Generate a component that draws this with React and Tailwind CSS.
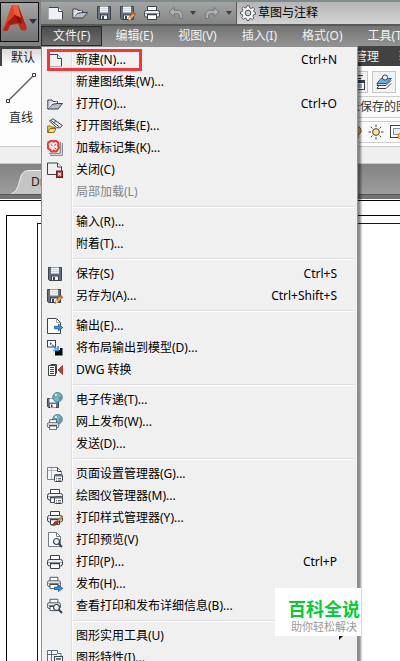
import React from 'react';

const INK = '#3b424c';

function Svg({ children, className = 'h-4 w-4' }) {
  return (
    <svg viewBox="0 0 16 16" className={`${className} shrink-0`} fill="none" aria-hidden="true">
      {children}
    </svg>
  );
}

const PageShape = () => (
  <g>
    <path d="M1 2.5H10.5L14.5 6.5V14.5H1Z" fill="#eef0f3" />
    <path d="M1 2.5H10.5L14.5 6.5V14.5" stroke={INK} />
    <path d="M0.5 2.5V14.5H14" stroke="#a9adb3" />
    <path d="M10.5 2.5V6.5H14.5" stroke={INK} fill="#fff" />
  </g>
);
const FolderShape = () => (
  <g stroke={INK} strokeLinejoin="round">
    <path d="M0.8 13V4H5L6 5.5H10.5V8" fill="#d8dbe0" />
    <path d="M0.8 13L5 8.5L10 7.5H15.5L11 13Z" fill="#b9bec6" />
    <path d="M1.5 12L5 7L10 6" stroke="#f7f7f7" />
  </g>
);
const FloppyShape = () => (
  <g>
    <path d="M1.5 1.5H14.5V14.5H2.5L1.5 13.5Z" fill="#66717f" stroke={INK} />
    <rect x="4" y="1.5" width="8" height="6" fill="#f4f5f6" />
    <path d="M4 3.5H12M4 5.5H12" stroke="#d5d8dc" />
    <rect x="4.5" y="10" width="7" height="4.5" fill="#f4f5f6" stroke={INK} />
    <rect x="6" y="11" width="2" height="3" fill={INK} />
  </g>
);
const PrinterShape = () => (
  <g stroke={INK}>
    <path d="M3.5 6V1.5H12.5V6" fill="#fff" />
    <rect x="0.5" y="5.5" width="15" height="6.5" rx="2" fill="#edeff1" />
    <path d="M1 8.5H15" stroke="#9aa0a8" />
    <path d="M3.5 9.5H12.5V14.5H3.5Z" fill="#fff" />
    <path d="M3 9.5H13" strokeWidth="1.5" />
  </g>
);
const PencilShape = () => (
  <g>
    <path d="M8 15.2L9 12.2L13.4 7.8L15.4 9.8L11 14.2Z" fill="#f3a431" stroke="#6b5024" strokeWidth=".6" />
    <path d="M12.8 8.4L14.8 10.4L16 9L14 7Z" fill="#c9563a" />
    <path d="M8 15.2L9 12.2L11 14.2Z" fill="#fff2d0" />
    <path d="M7.6 15.6L8.2 14.2L9.1 15.1Z" fill="#222" />
  </g>
);
const ArrowShape = ({ y = 9 }) => (
  <path d={`M7.5 ${y - 1.2}H11.5V${y - 3.3}L15.8 ${y}L11.5 ${y + 3.3}V${y + 1.2}H7.5Z`} fill="#3390e4" stroke="#145a9e" strokeWidth=".8" />
);
const LensShape = () => (
  <g>
    <circle cx="9.5" cy="9.5" r="3" fill="#e5f1fa" stroke={INK} strokeWidth="1.2" />
    <path d="M11.8 11.8L15 15" stroke={INK} strokeWidth="2" />
  </g>
);
const GlobeShape = () => (
  <g>
    <circle cx="10.5" cy="5.3" r="4.8" fill="#6bb5de" stroke="#40677f" strokeWidth=".8" />
    <path d="M8 2.3Q10 .8 11 3L9.8 5L8 5.8Q6.3 5 8 2.3ZM12 4.3L14.5 3.8Q15 7 12.8 8.5L11.5 6.8Z" fill="#6d9a78" />
    <circle cx="9" cy="3" r="1.2" fill="#d9f0fa" />
  </g>
);
const ListShape = () => (
  <g>
    <rect x="7.5" y="8.5" width="8" height="7" rx="1" fill="#fff" stroke={INK} />
    <path d="M8 9.5H15" stroke="#66717f" strokeWidth="2" />
    <path d="M9 12.5H10M11 12.5H14M9 14.2H10M11 14.2H14" stroke={INK} strokeWidth=".8" />
  </g>
);

const NewIcon = () => <Svg><PageShape /></Svg>;
const OpenIcon = () => <Svg><FolderShape /></Svg>;
const SaveIcon = () => <Svg><FloppyShape /></Svg>;
const SaveAsIcon = () => (
  <Svg><g transform="translate(-1 0)"><FloppyShape /></g><PencilShape /></Svg>
);
const PrintIcon = () => <Svg><PrinterShape /></Svg>;
const SheetSetIcon = () => (
  <Svg>
    <path d="M2.5 3L6 .8L15.3 7.5L12.8 10L9.5 9.5Z" fill="#eceef0" stroke={INK} />
    <path d="M4 2.5L12.5 9M6.8 4.6L8.8 3" stroke={INK} />
    <path d="M.7 14.5V8H3.5L4.5 9.2H8V10.5" fill="#f6cf55" stroke="#8e6410" />
    <path d="M.7 14.5L3 10.5H9L7 14.5Z" fill="#ffdf72" stroke="#8e6410" />
  </Svg>
);
const MarkupIcon = () => (
  <Svg>
    <path d="M15.3 3V15.3H3M13.3 2V13.3H2" stroke="#6e7680" />
    <rect x="0" y="0" width="12" height="12" fill="#fbdede" />
    <path d="M3 1.5Q5 -.3 6.3 1.7Q8.5 -.3 10 1.6Q12.5 3 11 5.4Q12.8 8 10.7 9.3Q9.5 12.5 6.8 10.8Q4 12.6 3.3 9.8Q0 9.2 1.3 6.2Q-.5 3 3 1.5Z" fill="#fce9e9" stroke="#f03434" strokeWidth="2" />
    <path d="M3.8 4.5L5.5 5.5M8.8 4L7.5 5.8M7.5 8L9 8.5" stroke="#f03434" />
  </Svg>
);
const CloseFileIcon = () => (
  <Svg>
    <path d="M.5 1H10.5L14.5 5V12.5H.5Z" fill="#eef0f3" stroke={INK} />
    <path d="M10.5 1V5H14.5" fill="#fff" stroke={INK} />
    <rect x="9.5" y="9" width="6" height="6.5" fill="#bf3434" stroke="#7e1717" />
    <path d="M11.1 10.8L14 13.7M14 10.8L11.1 13.7" stroke="#fff" strokeWidth="1.1" />
  </Svg>
);
const ExportIcon = () => (
  <Svg>
    <path d="M.5 .5H9.5L13.5 4.5V15.5H.5Z" fill="#fff" stroke={INK} />
    <path d="M9.5 .5V4.5H13.5" stroke="#9aa0a8" />
    <ArrowShape y={9.5} />
  </Svg>
);
const LayoutIcon = () => (
  <Svg>
    <rect x=".5" y=".5" width="8" height="6.5" fill="#fff" stroke={INK} />
    <path d="M3 2V5L5 4Z" fill={INK} />
    <path d="M8 10V15.5H15.5V8H13V10Z" fill="#050505" />
    <path d="M5 5L9.5 9M11 6V10.5H6.3" stroke="#3d95dd" strokeWidth="1.7" />
  </Svg>
);
const DwgIcon = () => (
  <Svg>
    <path d="M3.5 2.5H9.5V11.5" fill="#fff" stroke={INK} />
    <path d="M1.5 3.5H8.5V13.5H1.5Z" stroke={INK} fill="#fff" />
    <path d="M3 5.5H7M3 7.5H7M3 9.5H7M3 11.5H7" stroke={INK} />
    <path d="M15.5 3.5V12.5L11 8Z" fill="#d63434" stroke="#891b1b" strokeWidth=".7" />
  </Svg>
);
const TransmitIcon = () => (
  <Svg>
    <path d="M.5 6.5H11.5V15.5H1.5L.5 14.5Z" fill="#66717f" stroke={INK} />
    <rect x="2.5" y="6.5" width="7" height="4" fill="#fff" />
    <rect x="3" y="12" width="6" height="3.5" fill="#fff" />
    <rect x="4" y="12.5" width="1.5" height="2.5" fill={INK} />
    <GlobeShape />
  </Svg>
);
const WebPublishIcon = () => (
  <Svg><GlobeShape /><g transform="translate(0 4.5) scale(.76)"><PrinterShape /></g></Svg>
);
const PageSetupIcon = () => (
  <Svg>
    <path d="M.5 1.5H10.5L14.5 5.5V13.5H.5Z" fill="#f6f7f8" stroke="#777f89" />
    <path d="M4.5 2V13M1 4.5H10" stroke="#aeb4bc" />
    <path d="M10.5 1.5V5.5H14.5" stroke={INK} />
    <ListShape />
  </Svg>
);
const PlotterIcon = () => <Svg><PrinterShape /><ListShape /></Svg>;
const PlotStyleIcon = () => (
  <Svg>
    <PrinterShape />
    <path d="M10 11L14.5 6L16 7.5L11.5 12Z" fill="#f19c3a" stroke="#70471e" strokeWidth=".6" />
    <path d="M10.2 10.8Q7 10.8 6.3 13.5L4 15.5Q10 17 12 12.3Z" fill="#80462b" />
  </Svg>
);
const PreviewIcon = () => (
  <Svg>
    <path d="M1.5 .5H9.5L13.5 4.5V14.5H1.5Z" fill="#fff" stroke="#747c87" />
    <path d="M9.5 .5V4.5H13.5" stroke="#747c87" />
    <LensShape />
  </Svg>
);
const PublishIcon = () => (
  <Svg><g transform="scale(.87)"><PrinterShape /></g><ArrowShape y={12.3} /></Svg>
);
const DetailsIcon = () => (
  <Svg><g transform="scale(.87)"><PrinterShape /></g><LensShape /></Svg>
);
const PropertiesIcon = () => (
  <Svg>
    <path d="M.5 .5H10.5V3.5H14V13.5H.5Z" fill="#f2f3f5" stroke="#646c77" />
    <path d="M4.5 1V13M1 4.5H10" stroke="#646c77" />
    <rect x="7.5" y="6.5" width="8" height="9" fill="#fff" stroke={INK} />
    <path d="M9 9H14" stroke="#2f83d0" strokeWidth="2" />
  </Svg>
);
const UndoIcon = ({ flip }) => (
  <Svg className={flip ? 'h-4 w-4 -scale-x-100' : 'h-4 w-4'}>
    <path d="M1 7L6 2.5V5.3H10Q14.8 5.5 14.3 11V13.5H11.5V11Q11.5 8.7 9.5 8.7H6V11.5Z" fill="#b0b1b2" stroke="#66696b" strokeWidth=".8" />
  </Svg>
);
const Caret = () => (
  <svg viewBox="0 0 6 4" className="h-1 w-1.5 shrink-0" aria-hidden="true"><path d="M0 0H6L3 4Z" fill="#3d4043" /></svg>
);
const GearIcon = () => (
  <Svg className="pointer-events-none h-4 w-4">
    <path d="M6.8 .7H9.2L9.6 2.8L11.3 3.5L13.1 2.3L14.7 4L13.5 5.7L14 7L15.5 7.4V9.3L13.5 9.8L12.9 11.2L14 13L12.4 14.5L10.7 13.3L9.3 13.8L9 15.5H6.9L6.5 13.7L5 13L3.3 14.3L1.7 12.6L2.8 11L2.3 9.5L.5 9V7L2.3 6.5L3 5L1.9 3.3L3.5 1.8L5.1 3L6.4 2.5Z" fill="#f5f5f5" stroke="#4c5157" strokeWidth=".9" />
    <circle cx="8" cy="8" r="2.8" fill="#d0d2d4" stroke="#4c5157" />
  </Svg>
);

const groups = [
  [
    ['新建(N)...', NewIcon, 'Ctrl+N', 'mark'],
    ['新建图纸集(W)...'],
    ['打开(O)...', OpenIcon, 'Ctrl+O'],
    ['打开图纸集(E)...', SheetSetIcon],
    ['加载标记集(K)...', MarkupIcon],
    ['关闭(C)', CloseFileIcon],
    ['局部加载(L)', null, null, 'off'],
  ],
  [['输入(R)...'], ['附着(T)...']],
  [['保存(S)', SaveIcon, 'Ctrl+S'], ['另存为(A)...', SaveAsIcon, 'Ctrl+Shift+S']],
  [['输出(E)...', ExportIcon], ['将布局输出到模型(D)...', LayoutIcon], ['DWG 转换', DwgIcon]],
  [['电子传递(T)...', TransmitIcon], ['网上发布(W)...', WebPublishIcon], ['发送(D)...']],
  [
    ['页面设置管理器(G)...', PageSetupIcon],
    ['绘图仪管理器(M)...', PlotterIcon],
    ['打印样式管理器(Y)...', PlotStyleIcon],
    ['打印预览(V)', PreviewIcon],
    ['打印(P)...', PrintIcon, 'Ctrl+P'],
    ['发布(H)...', PublishIcon],
    ['查看打印和发布详细信息(B)...', DetailsIcon],
  ],
  [['图形实用工具(U)', null, null, 'sub'], ['图形特性(I)...', PropertiesIcon]],
];

function MenuRow({ item: [label, Icon, keys, kind] }) {
  return (
    <button
      type="button"
      role="menuitem"
      disabled={kind === 'off'}
      className="relative flex h-[22px] w-full items-center whitespace-nowrap pl-[3px] text-left text-black disabled:text-[#858585]"
    >
      <span className="flex w-[29px] shrink-0 items-center">{Icon && <Icon />}</span>
      <span className="flex-1">{label}</span>
      {keys && <span className="pr-[18px]">{keys}</span>}
      {kind === 'sub' && (
        <svg viewBox="0 0 4 8" className="mr-3 h-2 w-1" aria-hidden="true"><path d="M0 0L4 4L0 8Z" fill="#111" /></svg>
      )}
      {kind === 'mark' && <span className="absolute left-[3px] top-0 h-[22px] w-[95px] border-3 border-[#f83434]" />}
    </button>
  );
}

function FileMenu() {
  return (
    <div
      role="menu"
      className="absolute left-[41px] top-[46px] w-[317px] border border-[#8f8f8f] bg-[#f0f0f0] p-0.5 shadow-[3px_3px_2px_rgba(0,0,0,0.45)]"
    >
      <div className="relative">
        <div className="absolute inset-y-0 left-[27px] w-0.5 border-l border-[#e0e0e0] bg-white" />
        {groups.map((group, i) => (
          <React.Fragment key={i}>
            {i > 0 && (
              <div className="flex h-2 items-center pl-7">
                <div className="h-0.5 flex-1 border-t border-[#dcdcdc] bg-white" />
              </div>
            )}
            {group.map((item) => <MenuRow key={item[0]} item={item} />)}
          </React.Fragment>
        ))}
      </div>
    </div>
  );
}

function Header() {
  return (
    <header className="flex h-[46px] bg-[#828282]">
      <button type="button" aria-label="应用程序菜单" className="mt-0.5 flex h-10 w-[39px] shrink-0 items-start border border-[#111] bg-linear-to-b from-[#a6a6a6] to-[#747474] pl-0.5 pt-0.5">
        <svg viewBox="0 0 24 27" className="h-[27px] w-6" aria-hidden="true">
          <path d="M9 0H15L24 24Q21 27 18 25L15 19L7 20L5 25Q3 27 0 25Z" fill="#c22a19" />
          <path d="M9 0L12 10L5 18L0 25Z" fill="#e04527" />
          <path d="M9 0H15L18 13L12 10Z" fill="#f05a38" />
          <path d="M15 0L24 24L18 13Z" fill="#a81c11" />
          <path d="M12 10L18 13L19 19L13 17L7 20L4 18Z" fill="#8a140c" />
          <path d="M12 10L14 17L7 20L5 17Z" fill="#a51d12" />
          <path d="M0 25L5 17L7 20L5 25Q3 27 0 25Z" fill="#bb2416" />
        </svg>
        <svg viewBox="0 0 8 5" className="ml-0.5 mt-3.5 h-[5px] w-2" aria-hidden="true"><path d="M0 0H8L4 5Z" fill="#26384b" /></svg>
      </button>
      <div className="min-w-0 flex-1 pl-0.5">
        <div className="flex h-[26px] items-center border-b-2 border-[#555b58] border-t-2 border-t-[#7f8b8c] bg-linear-to-b from-[#a3a5a5] to-[#858585]">
          <div className="flex shrink-0 items-center gap-2 pl-[7px] pr-1">
            <button type="button" aria-label="新建"><NewIcon /></button>
            <button type="button" aria-label="打开"><OpenIcon /></button>
            <button type="button" aria-label="保存"><SaveIcon /></button>
            <button type="button" aria-label="另存为"><SaveAsIcon /></button>
            <button type="button" aria-label="打印"><PrintIcon /></button>
            <button type="button" aria-label="放弃" className="flex items-center gap-1.5"><UndoIcon /><Caret /></button>
            <button type="button" aria-label="重做" className="flex items-center gap-1.5"><UndoIcon flip /><Caret /></button>
          </div>
          <label className="flex h-full min-w-0 flex-1 items-center gap-0.5 border-l border-[#5b5b5b] bg-linear-to-b from-[#b4b4b4] to-[#d4d4d4] pl-[3px]">
            <GearIcon />
            <select aria-label="工作空间" className="min-w-0 flex-1 appearance-none bg-transparent text-black">
              <option>草图与注释</option>
            </select>
          </label>
        </div>
        <nav className="flex h-5 gap-px overflow-hidden whitespace-nowrap bg-linear-to-b from-[#747474] to-[#939393] text-[#f2f2f2]">
          <button type="button" className="shrink-0 border border-[#292929] bg-linear-to-b from-[#4c4c4c] to-[#6e6e6e] px-[11px]">文件(F)</button>
          {['编辑(E)', '视图(V)', '插入(I)', '格式(O)', '工具(T)'].map((t) => (
            <button key={t} type="button" className="shrink-0 px-3">{t}</button>
          ))}
        </nav>
      </div>
    </header>
  );
}

function Ribbon() {
  return (
    <section>
      <div className="flex h-5 items-end overflow-hidden whitespace-nowrap bg-[#424242] text-[#f0f0f0]">
        <button type="button" className="ml-0.5 h-[17px] w-[42px] shrink-0 bg-linear-to-b from-[#d8d8d8] to-white leading-4 text-[#222]">默认</button>
        <div className="w-[311px] shrink-0" />
        <button type="button" className="mr-5 h-[18px] shrink-0 leading-4">管理</button>
        <button type="button" className="h-[18px] shrink-0 leading-4">输出</button>
      </div>
      <div className="flex h-20 overflow-hidden bg-[#fdfdfd]">
        <button type="button" className="flex w-[42px] shrink-0 flex-col items-center gap-1.5 pt-1.5 text-[#2b2b2b]">
          <svg viewBox="0 0 32 32" className="h-8 w-8" fill="none" aria-hidden="true">
            <path d="M3 29L29 3" stroke="#555" strokeWidth="1.3" />
            <path d="M1.5 27.5H4.5V30.5H1.5ZM27.5 1.5H30.5V4.5H27.5Z" fill="#fff" stroke="#343c46" />
          </svg>
          直线
        </button>
        <div className="w-[304px] shrink-0" />
        <div className="flex min-w-0 flex-1 flex-col gap-[3px] pt-[5px]">
          <div className="flex h-[22px] gap-1">
            <button type="button" aria-label="图层特性" className="flex w-[22px] shrink-0 items-center justify-center border border-[#c7c7c7] bg-[#f4f4f4]">
              <Svg>
                <path d="M2 1.5H14M8 1.5V6M4 4.5H12" stroke={INK} />
                <rect x="5.5" y="6.5" width="10" height="9" fill="#fff" stroke={INK} />
                <path d="M6 8H15" stroke={INK} strokeWidth="2" />
                <path d="M8 11H13M8 13H13" stroke="#2f83d0" />
              </Svg>
            </button>
            <button type="button" aria-label="图层" className="flex w-6 shrink-0 items-center justify-center border border-[#c7c7c7] bg-[#f4f4f4]">
              <Svg>
                <path d="M4 10L1 14.5H10L15 9.5" fill="#fff" stroke={INK} />
                <path d="M4 7L1 11.5H10L15 6.5" fill="#d2d6dc" stroke={INK} />
                <path d="M5 4.5H15.5L10 9.5H.8Z" fill="#5eb1ec" stroke="#1c649f" />
                <circle cx="9" cy="3.5" r="2.6" fill="#eee" stroke={INK} />
              </Svg>
            </button>
          </div>
          <select aria-label="图层状态" className="h-[22px] w-full appearance-none overflow-hidden border-y border-[#cfcfcf] bg-[#fafafa] pl-0.5 text-[#333]">
            <option>未保存的图层状态</option>
          </select>
          <button type="button" aria-label="图层控制" className="flex h-[22px] items-center gap-1.5 overflow-hidden border-y border-[#cfcfcf] bg-[#fafafa]">
            <Svg>
              <path d="M8 2Q16 2 15 8Q14 10 12 11V14H9V10Z" fill="#d9ba59" stroke="#78611e" />
            </Svg>
            <Svg>
              <path d="M8 .5V3M8 13V15.5M.5 8H3M13 8H15.5M2.8 2.8L4.5 4.5M11.5 11.5L13.2 13.2M2.8 13.2L4.5 11.5M11.5 4.5L13.2 2.8" stroke={INK} />
              <circle cx="8" cy="8" r="3.4" fill="#ffe28a" stroke={INK} />
            </Svg>
            <Svg>
              <rect x=".5" y="1.5" width="13" height="12" fill="#fff" stroke={INK} />
              <rect x="3.5" y="4.5" width="8" height="6" fill="#eceef6" stroke="#8a90a0" />
              <circle cx="11" cy="12" r="3" fill="#ffcb3e" stroke="#ee7416" />
            </Svg>
          </button>
        </div>
      </div>
      <div className="h-[18px] border-y border-[#c9c9c9] bg-[#efefef]" />
    </section>
  );
}

export default function App() {
  return (
    <main className="relative flex h-screen flex-col overflow-hidden bg-white font-['Noto_Sans','Noto_Sans_CJK_SC',sans-serif] text-xs">
      <Header />
      <Ribbon />
      <div className="flex h-9 shrink-0 flex-col border-b border-white bg-linear-to-b from-[#828282] to-[#a2a2a2]">
        <div className="flex flex-1 items-end">
          <button type="button" className="relative ml-[11px] h-6 w-32 text-left">
            <svg viewBox="0 0 128 24" className="absolute inset-0 h-6 w-32" preserveAspectRatio="none" aria-hidden="true">
              <path d="M0 24Q6 22 8 13L10 6Q12 .5 18 .5H128V24Z" fill="#c5c5c5" />
              <path d="M0 24Q6 22 8 13L10 6Q12 .5 18 .5H128" fill="none" stroke="#eeeeee" />
            </svg>
            <span className="relative pl-5 text-[#222]">Drawing1</span>
          </button>
        </div>
        <div className="h-[5px] border-t border-[#555] bg-[#747474]" />
      </div>
      <div className="min-h-0 flex-1 border-t border-black pl-1.5 pt-3.5">
        <div className="h-full border-l border-t border-black pl-[30px] pt-[7px]">
          <div className="h-full border-l border-t border-[#0000c8]" />
        </div>
      </div>
      <FileMenu />
      <aside className="absolute left-[275px] top-[588px] flex h-12 w-[86px] flex-col items-center bg-white pl-3 pt-2.5 font-['Noto_Sans_CJK_SC',sans-serif]">
        <strong className="whitespace-nowrap text-lg leading-5 text-[#06cc36]">百科全说</strong>
        <span className="whitespace-nowrap text-[11px] leading-4 text-[#999]">助你轻松解决</span>
      </aside>
    </main>
  );
}
